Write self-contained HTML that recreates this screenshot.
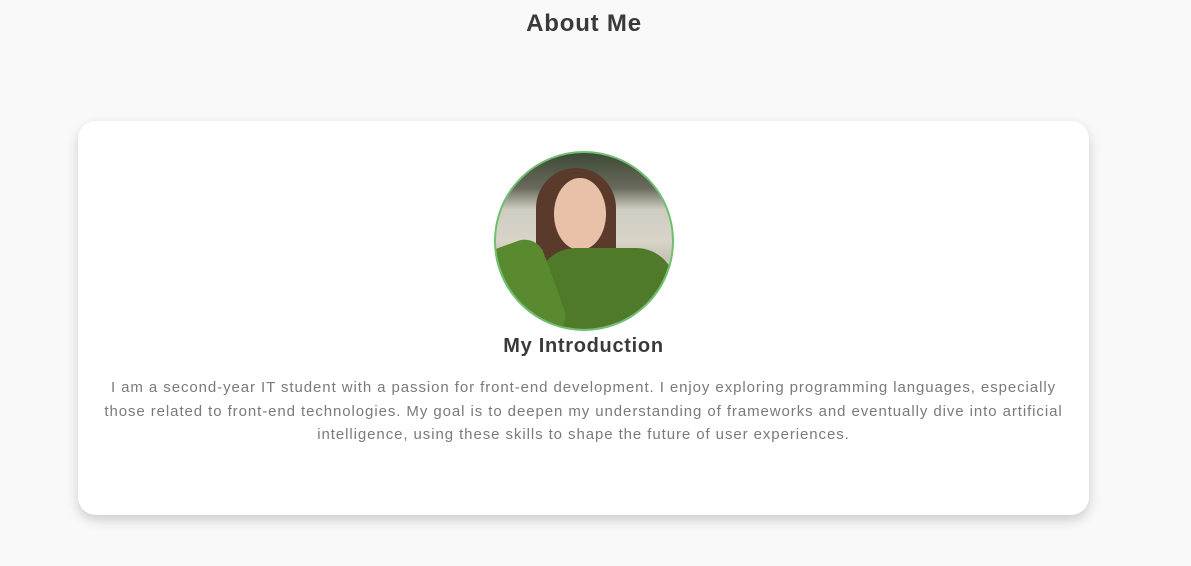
<!DOCTYPE html>
<html><head><style>
body{margin:0;background:#f9f9f9;font-family:"Liberation Sans",sans-serif;width:1191px;height:566px;overflow:hidden;position:relative}
h1{position:absolute;top:10px;left:0;width:1168px;text-align:center;margin:0;font-size:24px;font-weight:600;color:#3a3a3a;letter-spacing:0.8px}
.card{position:absolute;left:78px;top:121px;width:1011px;height:394px;background:#fff;border-radius:18px;box-shadow:0 5px 12px rgba(0,0,0,.18)}
.ph{position:absolute;left:416px;top:30px;width:176px;height:176px;border-radius:50%;border:2px solid #6cc070;overflow:hidden;
background:linear-gradient(180deg,#3d4a35 0%,#6a6a5c 20%,#cfccc2 32%,#d8d4c8 50%,#c8c2b5 60%,#e0dccf 70%,#d5d0c4 100%)}
.ph div{position:absolute}
h2{position:absolute;top:214px;left:0;width:1011px;text-align:center;margin:0;font-size:20px;font-weight:600;color:#3a3a3a;letter-spacing:0.7px}
p{position:absolute;top:255px;left:0;width:1011px;margin:0;text-align:center;font-size:15px;line-height:23.5px;color:#7a7a7a;letter-spacing:0.92px;white-space:nowrap}
</style></head><body>
<h1>About Me</h1>
<div class="card">
<div class="ph">
<div style="left:40px;top:15px;width:80px;height:120px;border-radius:40px 40px 10px 10px;background:#5a3a2a"></div>
<div style="left:58px;top:25px;width:52px;height:72px;border-radius:50%;background:#e8c1a8"></div>
<div style="left:40px;top:95px;width:140px;height:90px;border-radius:40px 40px 0 0;background:#4f7a2a"></div>
<div style="left:-10px;top:90px;width:70px;height:100px;transform:rotate(-20deg);background:#5a8a30;border-radius:20px"></div>
</div>
<h2>My Introduction</h2>
<p>I am a second-year IT student with a passion for front-end development. I enjoy exploring programming languages, especially<br>those related to front-end technologies. My goal is to deepen my understanding of frameworks and eventually dive into artificial<br>intelligence, using these skills to shape the future of user experiences.</p>
</div>
</body></html>
